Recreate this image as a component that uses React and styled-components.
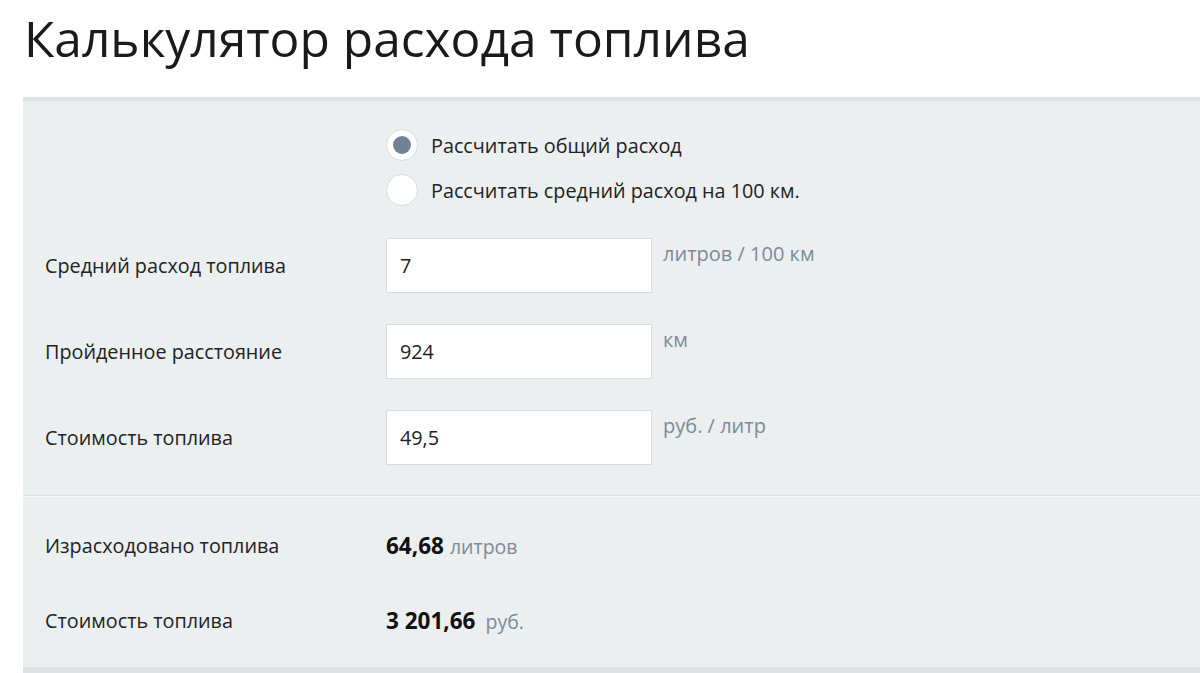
import React, { useState } from 'react'
import styled, { createGlobalStyle } from 'styled-components'

const GlobalStyle = createGlobalStyle`
  html, body {
    margin: 0;
    padding: 0;
    background: #fff;
    font-family: "Open Sans", "Noto Sans", sans-serif;
    color: #1f1f1f;
  }
`

const Page = styled.div`
  padding: 6px 0 0 23px;
`

const Title = styled.h1`
  margin: 0 0 0 1px;
  font-size: 49.7px;
  font-weight: 400;
  line-height: 64px;
  color: #1a1a1a;
`

const Panel = styled.div`
  margin-top: 27px;
  background: #ebeff0;
  border-top: 4px solid #dde3e5;
  border-bottom: 6px solid #dde3e5;
`

const Section = styled.div`
  padding: ${p => p.$pad};
  border-top: ${p => (p.$divider ? '1px solid #dbe1e4' : 'none')};
  box-shadow: ${p => (p.$divider ? 'inset 0 1px 0 #f6f8f9' : 'none')};
`

const Row = styled.div`
  display: grid;
  grid-template-columns: 363px 266px auto;
  align-items: center;
  margin-bottom: ${p => p.$gap || 0}px;
`

const Label = styled.div`
  padding-left: 22px;
  font-size: 19.8px;
  color: #222;
`

const Radios = styled.div`
  display: flex;
  flex-direction: column;
  gap: 13px;
  grid-column: 2 / 4;
`

const RadioLine = styled.label`
  display: flex;
  align-items: center;
  gap: 13px;
  font-size: 19.8px;
  color: #222;
  cursor: pointer;
`

const Circle = styled.span`
  width: 32px;
  height: 32px;
  box-sizing: border-box;
  border-radius: 50%;
  background: #fff;
  border: 1px solid #d6dce0;
  display: flex;
  align-items: center;
  justify-content: center;
  &::after {
    content: '';
    width: 18px;
    height: 18px;
    border-radius: 50%;
    background: ${p => (p.$on ? '#6f8394' : 'transparent')};
  }
`

const Field = styled.input`
  width: 266px;
  height: 55px;
  box-sizing: border-box;
  border: 1px solid #d6dce0;
  background: #fff;
  padding: 0 13px;
  font-family: inherit;
  font-size: 19.8px;
  color: #222;
  outline: none;
`

const Unit = styled.div`
  align-self: start;
  padding-left: 11px;
  font-size: 20px;
  color: #7b8b98;
  line-height: 26px;
  margin-top: 3px;
`

const Value = styled.div`
  grid-column: 2 / 4;
  font-size: 19.5px;
  color: #7b8b98;
  b {
    color: #111;
    font-weight: 700;
    font-size: 22.5px;
    margin-right: ${p => p.$space || 6}px;
  }
`

const inputs = [
  { label: 'Средний расход топлива', value: '7', unit: 'литров / 100 км' },
  { label: 'Пройденное расстояние', value: '924', unit: 'км' },
  { label: 'Стоимость топлива', value: '49,5', unit: 'руб. / литр' },
]

export default function App() {
  const [mode, setMode] = useState(0)
  const [vals, setVals] = useState(inputs.map(i => i.value))

  return (
    <Page>
      <GlobalStyle />
      <Title>Калькулятор расхода топлива</Title>
      <Panel>
        <Section $pad="28px 0 30px">
          <Row $gap={32}>
            <div />
            <Radios>
              {['Рассчитать общий расход', 'Рассчитать средний расход на 100 км.'].map((t, i) => (
                <RadioLine key={t} onClick={() => setMode(i)}>
                  <Circle $on={mode === i} />
                  {t}
                </RadioLine>
              ))}
            </Radios>
          </Row>
          {inputs.map((f, i) => (
            <Row key={f.label} $gap={i < 2 ? 31 : 0}>
              <Label>{f.label}</Label>
              <Field
                value={vals[i]}
                onChange={e => setVals(vals.map((v, j) => (j === i ? e.target.value : v)))}
              />
              <Unit>{f.unit}</Unit>
            </Row>
          ))}
        </Section>
        <Section $divider $pad="34px 0 31px">
          <Row $gap={44}>
            <Label>Израсходовано топлива</Label>
            <Value><b>64,68</b>литров</Value>
          </Row>
          <Row>
            <Label>Стоимость топлива</Label>
            <Value $space={10}><b>3 201,66</b>руб.</Value>
          </Row>
        </Section>
      </Panel>
    </Page>
  )
}
